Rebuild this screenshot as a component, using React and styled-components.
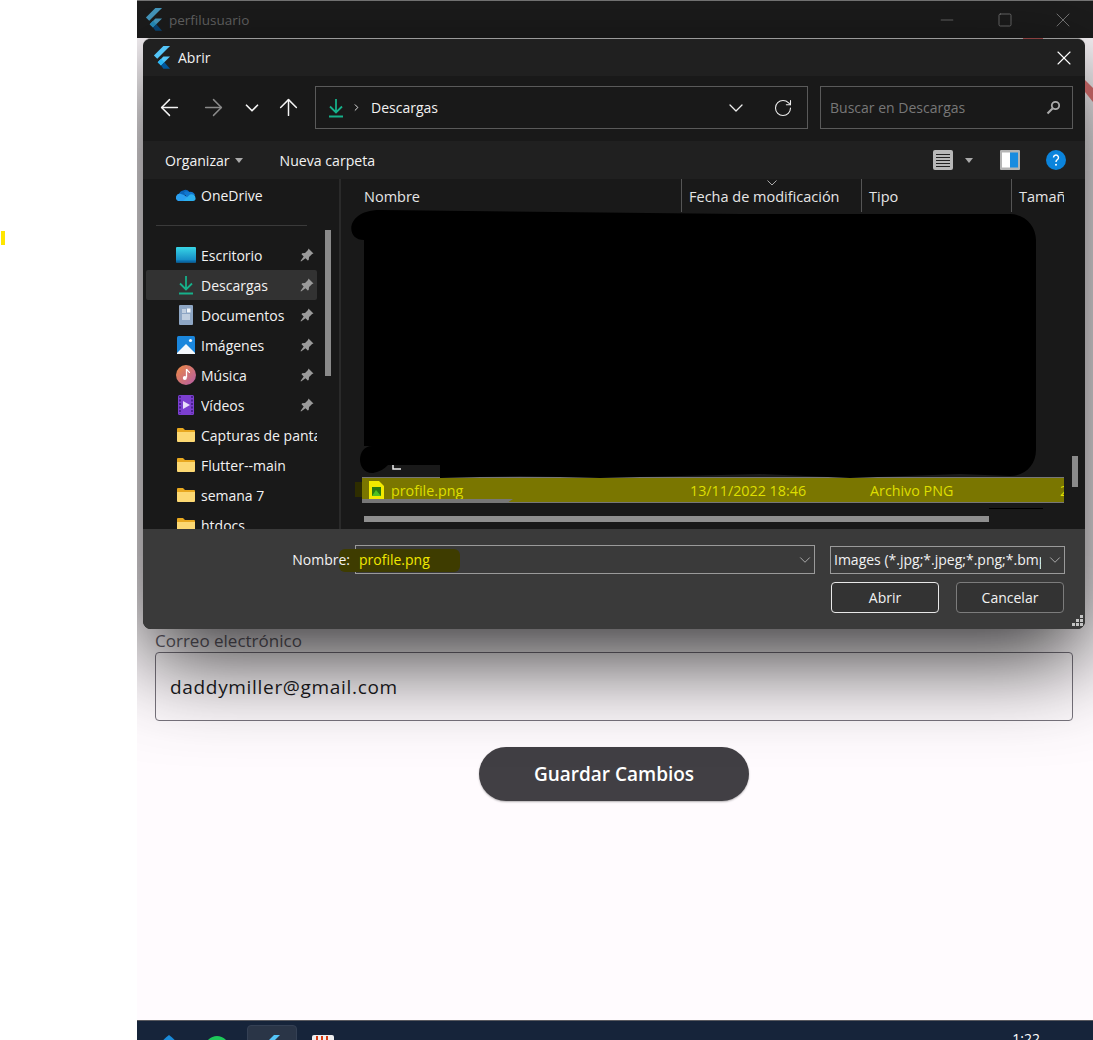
import React from 'react';
import styled, { createGlobalStyle } from 'styled-components';
import { ArrowLeft, ArrowRight, ArrowUp, ChevronDown, ChevronRight, RotateCw, X, Minus, Square } from 'lucide-react';

const GlobalStyle = createGlobalStyle`
  html, body { margin: 0; padding: 0; background: #fff; }
  body { font-family: "Open Sans", "Noto Sans", "Liberation Sans", sans-serif; }
  * { box-sizing: border-box; }
`;

const Page = styled.div`
  display: flex;
  width: 1093px;
  height: 1040px;
  overflow: hidden;
  background: #fff;
`;

const Gutter = styled.div`
  width: 137px;
  flex: none;
  padding: 231px 0 0 1px;
`;

const Marker = styled.div`
  width: 4px;
  height: 14px;
  background: #ffe600;
`;

const AppWindow = styled.div`
  position: relative;
  flex: 1;
  display: flex;
  flex-direction: column;
  overflow: hidden;
  background: #fffbfe;
`;

const WindowBar = styled.div`
  height: 38px;
  flex: none;
  display: flex;
  align-items: center;
  gap: 6px;
  padding-left: 7px;
  background: #1c1c1c;
  border-top: 1px solid #777;
  color: #666;
  font-size: 13.5px;
`;

const WindowControls = styled.div`
  margin-left: auto;
  padding-right: 1px;
  display: flex;
  color: #777;
`;

const WindowControl = styled.div`
  width: 58px;
  height: 37px;
  display: flex;
  align-items: center;
  justify-content: center;
`;

const Form = styled.div`
  flex: 1;
  padding: 593px 20px 0 18px;
  display: flex;
  flex-direction: column;
`;

const FieldLabel = styled.div`
  height: 21px;
  font-size: 17px;
  line-height: 19px;
  color: #66626c;
`;

const Field = styled.div`
  height: 69px;
  display: flex;
  align-items: center;
  padding-left: 14px;
  border: 1px solid #79747e;
  border-radius: 4px;
  font-size: 19px;
  letter-spacing: 0.68px;
  color: #1c1b1f;
`;

const SaveRow = styled.div`
  display: flex;
  justify-content: center;
  padding-top: 26px;
`;

const SaveButton = styled.div`
  width: 270px;
  height: 54px;
  display: flex;
  align-items: center;
  justify-content: center;
  border-radius: 27px;
  background: #413f44;
  color: #fff;
  font-size: 19px;
  font-weight: 600;
  box-shadow: 0 1px 2px rgba(0, 0, 0, .3);
`;

const Taskbar = styled.div`
  height: 20px;
  flex: none;
  display: flex;
  align-items: flex-start;
  padding: 4px 0 0 23px;
  overflow: hidden;
  background: #16243a;
  border-top: 1px solid #5a5a5f;
`;

const TaskIcon = styled.div`
  width: ${p => p.$w}px;
  margin-right: ${p => p.$gap}px;
  padding-top: ${p => p.$top}px;
  flex: none;
  display: flex;
  justify-content: center;
`;

const ActiveTile = styled(TaskIcon)`
  height: 30px;
  background: #2a3547;
  border: 1px solid #344054;
  border-radius: 4px;
`;

const Clock = styled.div`
  margin-left: auto;
  padding: 5px 53px 0 0;
  color: #fff;
  font-size: 14px;
  line-height: 18px;
`;

const RedStripes = styled.svg`
  position: absolute;
  top: 0;
  left: 0;
`;

const Dialog = styled.div`
  position: absolute;
  top: 38px;
  left: 6px;
  width: 942px;
  height: 591px;
  display: flex;
  flex-direction: column;
  overflow: hidden;
  background: #191919;
  border-radius: 8px;
  border-top: 1px solid #9a9a9a;
  color: #f2f2f2;
  font-size: 14px;
  box-shadow: 0 30px 90px rgba(0, 0, 0, .8);
`;

const DialogTitle = styled.div`
  height: 37px;
  flex: none;
  display: flex;
  align-items: center;
  gap: 7px;
  padding-left: 9px;
  background: #202020;
`;

const CloseBox = styled.div`
  margin-left: auto;
  width: 42px;
  display: flex;
  justify-content: center;
  color: #fff;
`;

const AddressRow = styled.div`
  height: 65px;
  flex: none;
  display: flex;
  align-items: center;
  padding: 0 12px 2px 13px;
  background: #191919;
`;

const NavButton = styled.div`
  width: ${p => p.$w}px;
  flex: none;
  display: flex;
  color: ${p => (p.$dim ? '#8a8a8a' : '#f4f4f4')};
`;

const AddressBox = styled.div`
  width: 493px;
  height: 43px;
  margin-left: 13px;
  display: flex;
  align-items: center;
  padding-left: 10px;
  border: 1px solid #5a5a5a;
`;

const Crumb = styled.span`
  margin-left: 9px;
`;

const AddressEnd = styled.div`
  margin-left: auto;
  display: flex;
  align-items: center;
  gap: 25px;
  padding-right: 14px;
  color: #eee;
`;

const SearchBox = styled.div`
  width: 253px;
  height: 43px;
  margin-left: 12px;
  display: flex;
  align-items: center;
  justify-content: space-between;
  padding: 0 11px 0 9px;
  border: 1px solid #5a5a5a;
  color: #777;
`;

const CommandBar = styled.div`
  height: 38px;
  flex: none;
  display: flex;
  align-items: center;
  padding: 0 19px 0 22px;
  background: #202020;
`;

const Command = styled.div`
  display: flex;
  align-items: center;
  gap: 5px;
  margin-right: 37px;
  font-size: 14.1px;
`;

const Caret = styled.span`
  width: 0;
  height: 0;
  border-left: 4.5px solid transparent;
  border-right: 4.5px solid transparent;
  border-top: 5px solid #aaa;
`;

const ToolCaret = styled(Caret)`
  margin: 0 27px 0 12px;
`;

const ToolGap = styled.span`
  width: 26px;
`;

const CommandTools = styled.div`
  margin-left: auto;
  display: flex;
  align-items: center;
`;

const Main = styled.div`
  position: relative;
  height: 350px;
  flex: none;
  display: flex;
  overflow: hidden;
`;

const NavPane = styled.div`
  position: relative;
  width: 198px;
  flex: none;
  padding: 1px 0 0 3px;
  overflow: hidden;
  border-right: 2px solid #2a2a2a;
`;

const NavRow = styled.div`
  width: 171px;
  height: 30px;
  flex: none;
  display: flex;
  align-items: center;
  padding-left: 30px;
  white-space: nowrap;
  overflow: hidden;
  border-radius: 2px;
  background: ${p => (p.$active ? '#323232' : 'transparent')};
`;

const NavIconBox = styled.div`
  width: 20px;
  height: 20px;
  flex: none;
  margin-right: 5px;
  display: flex;
  align-items: center;
  justify-content: center;
`;

const NavName = styled.span`
  flex: 1;
  overflow: hidden;
`;

const PinBox = styled.div`
  flex: none;
  display: flex;
  margin-right: 3px;
`;

const NavSeparator = styled.div`
  width: 151px;
  height: 1px;
  margin: 15px 0 14px 10px;
  background: #3a3a3a;
`;

const NavScroll = styled.div`
  position: absolute;
  top: 51px;
  left: 182px;
  width: 6px;
  height: 146px;
  background: #8a8a8a;
`;

const ListPane = styled.div`
  flex: 1;
  position: relative;
  padding-left: 21px;
`;

const Columns = styled.div`
  display: grid;
  width: ${p => p.$first + 382}px;
  grid-template-columns: ${p => p.$first}px 180px 150px 52px;
`;

const HeaderRow = styled(Columns)`
  height: 33px;
  margin-left: -4px;
`;

const HeaderCell = styled.div`
  position: relative;
  padding: 8px 0 0 ${p => p.$pad}px;
  overflow: hidden;
  white-space: nowrap;
  color: #e6e6e6;
  font-size: 14.5px;
  border-right: ${p => (p.$last ? 'none' : '1px solid #555')};
`;

const SortChevron = styled.svg`
  position: absolute;
  top: 1px;
  left: 85px;
`;

const Spacer = styled.div`
  height: 265px;
`;

const FileRow = styled(Columns)`
  height: 26px;
  align-items: center;
  background: #7a7600;
  border-top: 1px solid #777;
  border-bottom: 1px solid #777;
  color: #dede00;
  font-size: 14.3px;
`;

const NameCell = styled.div`
  display: flex;
  align-items: center;
  gap: 7px;
  padding-left: 7px;
`;

const Cell = styled.div`
  padding-left: ${p => p.$pad}px;
  white-space: nowrap;
  overflow: hidden;
`;

const HScroll = styled.div`
  width: 625px;
  height: 6px;
  margin: 13px 0 0 2px;
  background: #8f8f8f;
`;

const VScroll = styled.div`
  position: absolute;
  top: 277px;
  left: 731px;
  width: 6px;
  height: 31px;
  background: #8a8a8a;
`;

const Scribbles = styled.svg`
  position: absolute;
  top: 0;
  left: 198px;
`;

const Footer = styled.div`
  position: relative;
  flex: 1;
  padding: 16px 20px 0 0;
  background: #3a3a3a;
`;

const FooterRow = styled.div`
  display: flex;
  align-items: center;
  justify-content: flex-end;
`;

const NameLabel = styled.span`
  position: relative;
  z-index: 1;
  margin-right: 5px;
`;

const TextInput = styled.div`
  position: relative;
  width: 460px;
  height: 29px;
  display: flex;
  align-items: center;
  justify-content: space-between;
  padding: 0 0 0 3px;
  border: 1px solid #9a9a9a;
  color: #f0e800;
`;

const InputHighlight = styled.div`
  position: absolute;
  top: 3px;
  left: -17px;
  width: 121px;
  height: 23px;
  border-radius: 6px;
  background: #3e3c00;
`;

const InputText = styled.span`
  position: relative;
`;

const FilterBox = styled.div`
  width: 235px;
  height: 28px;
  margin-left: 15px;
  display: flex;
  align-items: center;
  gap: 5px;
  padding: 0 0 0 3px;
  border: 1px solid #9a9a9a;
  white-space: nowrap;
`;

const FilterText = styled.span`
  flex: 1;
  overflow: hidden;
`;

const ActionRow = styled(FooterRow)`
  margin-top: 8px;
  padding-right: 1px;
  gap: 17px;
`;

const ActionButton = styled.div`
  width: 108px;
  height: 31px;
  display: flex;
  align-items: center;
  justify-content: center;
  background: #333;
  border-radius: 4px;
  border: ${p => (p.$primary ? '1.5px solid #e8e8e8' : '1px solid #7c7c7c')};
`;

const Grip = styled.svg`
  position: absolute;
  right: 2px;
  bottom: 3px;
`;

const FlutterLogo = ({ size = 19, dim }) => (
  <svg width={size} height={size * 1.2} viewBox="0 0 20 24" style={{ opacity: dim ? 0.75 : 1, flex: 'none' }}>
    <path d="M12 0h7L5.500 13.500 2 10z" fill="#54c5f8" />
    <path d="M19 11h-7l-6 6 3.500 3.500z" fill="#54c5f8" />
    <path d="M6 17l3.500-3.500 3.500 3.500-3.500 3.500z" fill="#29b6f6" />
    <path d="M9.500 20.500L13 17l6 7h-7z" fill="#01579b" />
  </svg>
);

const DownloadIcon = ({ size = 20 }) => (
  <svg width={size} height={size} viewBox="0 0 20 20" fill="none" stroke="#16b08a" strokeWidth="1.800">
    <path d="M10 1v13M4 8.500l6 6 6-6M3 18.500h14" />
  </svg>
);

const PinIcon = () => (
  <svg width="14" height="14" viewBox="0 0 14 14" fill="#9a9a9a">
    <path d="M8.500 0.500l5 5-1.400.6-3 3-.4 2.900-1 .6-2.200-2.300L1 13.500l-.5-.5 3.200-4.500L1.500 6.300l.6-1 2.900-.4 3-3z" />
  </svg>
);

const OneDriveIcon = () => (
  <svg width="20" height="14" viewBox="0 0 20 14">
    <path d="M7 2.500a5 5 0 0 1 6.500 1.500L8 8 3 6.500a5 5 0 0 1 4-4z" fill="#0a64b8" />
    <path d="M8 4.500a4 4 0 0 1 5-.5 4.500 4.500 0 0 1 6 3L12 12z" fill="#1078d0" />
    <path d="M3.500 5.500a4 4 0 0 0-1.500 7.500h15l-9-6z" fill="#2a9ff0" />
    <path d="M14 6.500a4 4 0 0 1 5.500 3.500c.5 1.500-.5 3-2.500 3H7z" fill="#2cb0ee" />
  </svg>
);

const DesktopIcon = () => (
  <svg width="20" height="16" viewBox="0 0 20 16">
    <defs>
      <linearGradient id="desk" x1="0" y1="0" x2="0" y2="1">
        <stop offset="0" stopColor="#38d6e6" />
        <stop offset="1" stopColor="#0f7fc0" />
      </linearGradient>
    </defs>
    <rect width="20" height="15.500" rx="1" fill="url(#desk)" />
    <rect y="13.500" width="20" height="2" fill="#0a6aa8" />
  </svg>
);

const DocumentIcon = () => (
  <svg width="14" height="20" viewBox="0 0 14 20">
    <rect width="14" height="20" rx="1" fill="#8ea6c4" />
    <path d="M3 5h4M3 7h4M3 10h8M3 12h8M3 14h8" stroke="#f2f6fa" strokeWidth="1" />
    <rect x="8" y="3.500" width="3.500" height="4" fill="#f2f6fa" />
  </svg>
);

const PicturesIcon = () => (
  <svg width="18" height="18" viewBox="0 0 18 18">
    <rect width="18" height="18" rx="1.500" fill="#1a86dc" />
    <path d="M0 17l6-6 3-3 4 4 5 5v1H0z" fill="#f4f8fc" />
    <circle cx="13.500" cy="4.500" r="1.600" fill="#f4f8fc" />
  </svg>
);

const MusicIcon = () => (
  <svg width="20" height="20" viewBox="0 0 20 20">
    <defs>
      <linearGradient id="mus" x1="0" y1="0" x2="1" y2="1">
        <stop offset="0" stopColor="#ee8a40" />
        <stop offset="1" stopColor="#b45ca8" />
      </linearGradient>
    </defs>
    <circle cx="10" cy="10" r="10" fill="url(#mus)" />
    <path d="M10.500 4v8.500" stroke="#fff" strokeWidth="1.300" />
    <path d="M10.500 4c.5 2 3 2 3 4" stroke="#fff" strokeWidth="1.200" fill="none" />
    <circle cx="8.800" cy="13" r="2" fill="#fff" />
  </svg>
);

const VideoIcon = () => (
  <svg width="16" height="20" viewBox="0 0 16 20">
    <rect width="16" height="20" rx="1.500" fill="#7c3fd0" />
    <path d="M2 1v18M14 1v18" stroke="#4a2290" strokeWidth="2" strokeDasharray="2 1.500" />
    <path d="M5 6l7 4-7 4z" fill="#e8ddfa" />
  </svg>
);

const FolderIcon = () => (
  <svg width="18" height="14" viewBox="0 0 18 14">
    <path d="M0 1a1 1 0 0 1 1-1h5l2 2h9a1 1 0 0 1 1 1v2H0z" fill="#e8a820" />
    <path d="M0 4h18v9a1 1 0 0 1-1 1H1a1 1 0 0 1-1-1z" fill="#fcd873" />
  </svg>
);

const SearchIcon = () => (
  <svg width="15" height="15" viewBox="0 0 15 15" fill="none" stroke="#aaa">
    <circle cx="9.500" cy="5.500" r="3.700" strokeWidth="1.800" />
    <path d="M6.500 8.500L1.500 13.500" strokeWidth="2.200" />
  </svg>
);

const ListViewIcon = () => (
  <svg width="20" height="20" viewBox="0 0 20 20">
    <rect width="20" height="20" rx="2" fill="#b8b8b8" />
    <path d="M3 4.500h14M3 7.500h14M3 10.500h14M3 13.500h14M3 16.500h14" stroke="#222" strokeWidth="1" />
  </svg>
);

const PreviewIcon = () => (
  <svg width="20" height="20" viewBox="0 0 20 20">
    <rect width="20" height="20" rx="1" fill="#b4b4b4" />
    <rect x="2" y="2.500" width="8" height="15" fill="#fff" />
    <rect x="10" y="2.500" width="8" height="15" fill="#1a8ce0" />
  </svg>
);

const HelpIcon = () => (
  <svg width="20" height="20" viewBox="0 0 20 20">
    <circle cx="10" cy="10" r="10" fill="#0b84dc" />
    <path d="M7.500 7.500a2.500 2.500 0 1 1 3.800 2.200c-.9.500-1.300 1-1.300 2.300" fill="none" stroke="#fff" strokeWidth="1.400" />
    <circle cx="10" cy="14.800" r="1" fill="#fff" />
  </svg>
);

const ImageFileIcon = () => (
  <svg width="15" height="19" viewBox="0 0 15 19">
    <path d="M0 0h10l5 5v14H0z" fill="#f2ea00" />
    <rect x="3" y="6" width="9" height="9" fill="#2a7a10" />
    <path d="M3 15l4-6 5 6z" fill="#4ec020" />
  </svg>
);

const places = [
  { name: 'Escritorio', icon: <DesktopIcon />, pinned: true },
  { name: 'Descargas', icon: <DownloadIcon />, pinned: true, active: true },
  { name: 'Documentos', icon: <DocumentIcon />, pinned: true },
  { name: 'Imágenes', icon: <PicturesIcon />, pinned: true },
  { name: 'Música', icon: <MusicIcon />, pinned: true },
  { name: 'Vídeos', icon: <VideoIcon />, pinned: true },
  { name: 'Capturas de pantalla', icon: <FolderIcon /> },
  { name: 'Flutter--main', icon: <FolderIcon /> },
  { name: 'semana 7', icon: <FolderIcon /> },
  { name: 'htdocs', icon: <FolderIcon /> },
];

function OpenDialog() {
  return (
    <Dialog>
      <DialogTitle>
        <FlutterLogo />
        <span>Abrir</span>
        <CloseBox><X size={24} strokeWidth={1.1} /></CloseBox>
      </DialogTitle>

      <AddressRow>
        <NavButton $w={44}><ArrowLeft size={27} strokeWidth={1.300} /></NavButton>
        <NavButton $w={41} $dim><ArrowRight size={27} strokeWidth={1.300} /></NavButton>
        <NavButton $w={34}><ChevronDown size={22} strokeWidth={1.800} /></NavButton>
        <NavButton $w={27}><ArrowUp size={27} strokeWidth={1.300} /></NavButton>
        <AddressBox>
          <DownloadIcon />
          <ChevronRight size={11} strokeWidth={2} style={{ marginLeft: 5 }} />
          <Crumb>Descargas</Crumb>
          <AddressEnd>
            <ChevronDown size={24} strokeWidth={1.300} />
            <RotateCw size={20} strokeWidth={1.300} />
          </AddressEnd>
        </AddressBox>
        <SearchBox>
          <span>Buscar en Descargas</span>
          <SearchIcon />
        </SearchBox>
      </AddressRow>

      <CommandBar>
        <Command>Organizar <Caret /></Command>
        <Command>Nueva carpeta</Command>
        <CommandTools>
          <ListViewIcon />
          <ToolCaret />
          <PreviewIcon />
          <ToolGap />
          <HelpIcon />
        </CommandTools>
      </CommandBar>

      <Main>
        <NavPane>
          <NavRow>
            <NavIconBox><OneDriveIcon /></NavIconBox>
            <NavName>OneDrive</NavName>
          </NavRow>
          <NavSeparator />
          {places.map(place => (
            <NavRow key={place.name} $active={place.active}>
              <NavIconBox>{place.icon}</NavIconBox>
              <NavName>{place.name}</NavName>
              {place.pinned && <PinBox><PinIcon /></PinBox>}
            </NavRow>
          ))}
          <NavScroll />
        </NavPane>

        <ListPane>
          <HeaderRow $first={324}>
            <HeaderCell $pad={6}>Nombre</HeaderCell>
            <HeaderCell $pad={7}>
              <SortChevron width="10" height="6" viewBox="0 0 10 6" fill="none" stroke="#aaa">
                <path d="M0.500 0.500L5 5l4.500-4.500" />
              </SortChevron>
              Fecha de modificación
            </HeaderCell>
            <HeaderCell $pad={7}>Tipo</HeaderCell>
            <HeaderCell $pad={7} $last>Tamaño</HeaderCell>
          </HeaderRow>
          <Spacer />
          <FileRow $first={320}>
            <NameCell><ImageFileIcon />profile.png</NameCell>
            <Cell $pad={8}>13/11/2022 18:46</Cell>
            <Cell $pad={8}>Archivo PNG</Cell>
            <Cell $pad={48}>2</Cell>
          </FileRow>
          <HScroll />
          <VScroll />
        </ListPane>

        {/* rotulador negro encima de la lista, coordenadas desde el panel */}
        <Scribbles width="744" height="350" viewBox="0 0 744 350">
          <path
            d="M39 31 L400 35 L669 35 C685 35 695 48 695 61 L695 271 C695 285 685 297 669 297 L619 295 L509 299 L419 295 L259 299 L179 297 L99 299 L99 286 L47 286 C39 294 31 294 31 294 C15 294 15 267 31 267 L23 267 L23 61 C4 61 4 31 39 31 Z"
            fill="#000"
          />
          <path d="M52 286v4h8" fill="none" stroke="#eee" strokeWidth="1.500" />
          <path d="M14 303h7v15h-7z" fill="#2e2d00" />
          <path d="M21 320h151l-6 4H21z" fill="#777" />
          <path d="M648 329h54v1h-54z" fill="#000" />
        </Scribbles>
      </Main>

      <Footer>
        <FooterRow>
          <NameLabel>Nombre:</NameLabel>
          <TextInput>
            <InputHighlight />
            <InputText>profile.png</InputText>
            <ChevronDown size={18} strokeWidth={1} color="#ccc" />
          </TextInput>
          <FilterBox>
            <FilterText>Images (*.jpg;*.jpeg;*.png;*.bmp;*.gif)</FilterText>
            <ChevronDown size={18} strokeWidth={1} color="#ccc" />
          </FilterBox>
        </FooterRow>
        <ActionRow>
          <ActionButton $primary>Abrir</ActionButton>
          <ActionButton>Cancelar</ActionButton>
        </ActionRow>
        <Grip width="11" height="11" viewBox="0 0 11 11" fill="#c4c4c4">
          <rect x="8" y="0" width="3" height="3" />
          <rect x="4" y="4" width="3" height="3" />
          <rect x="8" y="4" width="3" height="3" />
          <rect x="0" y="8" width="3" height="3" />
          <rect x="4" y="8" width="3" height="3" />
          <rect x="8" y="8" width="3" height="3" />
        </Grip>
      </Footer>
    </Dialog>
  );
}

export default function App() {
  return (
    <Page>
      <GlobalStyle />
      <Gutter><Marker /></Gutter>
      <AppWindow>
        <WindowBar>
          <FlutterLogo dim />
          <span>perfilusuario</span>
          <WindowControls>
            <WindowControl><Minus size={20} strokeWidth={1} /></WindowControl>
            <WindowControl><Square size={16} strokeWidth={1.300} /></WindowControl>
            <WindowControl><X size={24} strokeWidth={1} /></WindowControl>
          </WindowControls>
        </WindowBar>

        <Form>
          <FieldLabel>Correo electrónico</FieldLabel>
          <Field>daddymiller@gmail.com</Field>
          <SaveRow><SaveButton>Guardar Cambios</SaveButton></SaveRow>
        </Form>

        <Taskbar>
          <TaskIcon $w={18} $gap={27} $top={10}>
            <svg width="18" height="18" viewBox="0 0 18 18"><path d="M9 0c3 2 6 5 9 9l-9 9-9-9c3-4 6-7 9-9z" fill="#1a8ad8" /></svg>
          </TaskIcon>
          <TaskIcon $w={24} $gap={18} $top={11}>
            <svg width="24" height="24" viewBox="0 0 24 24"><circle cx="12" cy="12" r="12" fill="#1ec85a" /></svg>
          </TaskIcon>
          <ActiveTile $w={50} $gap={15} $top={9}>
            <svg width="20" height="20" viewBox="0 0 20 20"><path d="M12 0h6L4 14 1 11z" fill="#54c5f8" /></svg>
          </ActiveTile>
          <TaskIcon $w={22} $gap={0} $top={10}>
            <svg width="22" height="20" viewBox="0 0 22 20">
              <rect width="22" height="20" rx="2" fill="#eee" />
              <path d="M5 1v4M10 1v4M15 1v4" stroke="#d83a10" strokeWidth="2" />
            </svg>
          </TaskIcon>
          <Clock>1:22</Clock>
        </Taskbar>

        <OpenDialog />
        <RedStripes width="956" height="110" viewBox="0 0 956 110">
          <path d="M886 38h20v1h-20z" fill="#8a4040" />
          <path d="M948 80l8 8v14l-8-10z" fill="#b05a5a" />
        </RedStripes>
      </AppWindow>
    </Page>
  );
}
